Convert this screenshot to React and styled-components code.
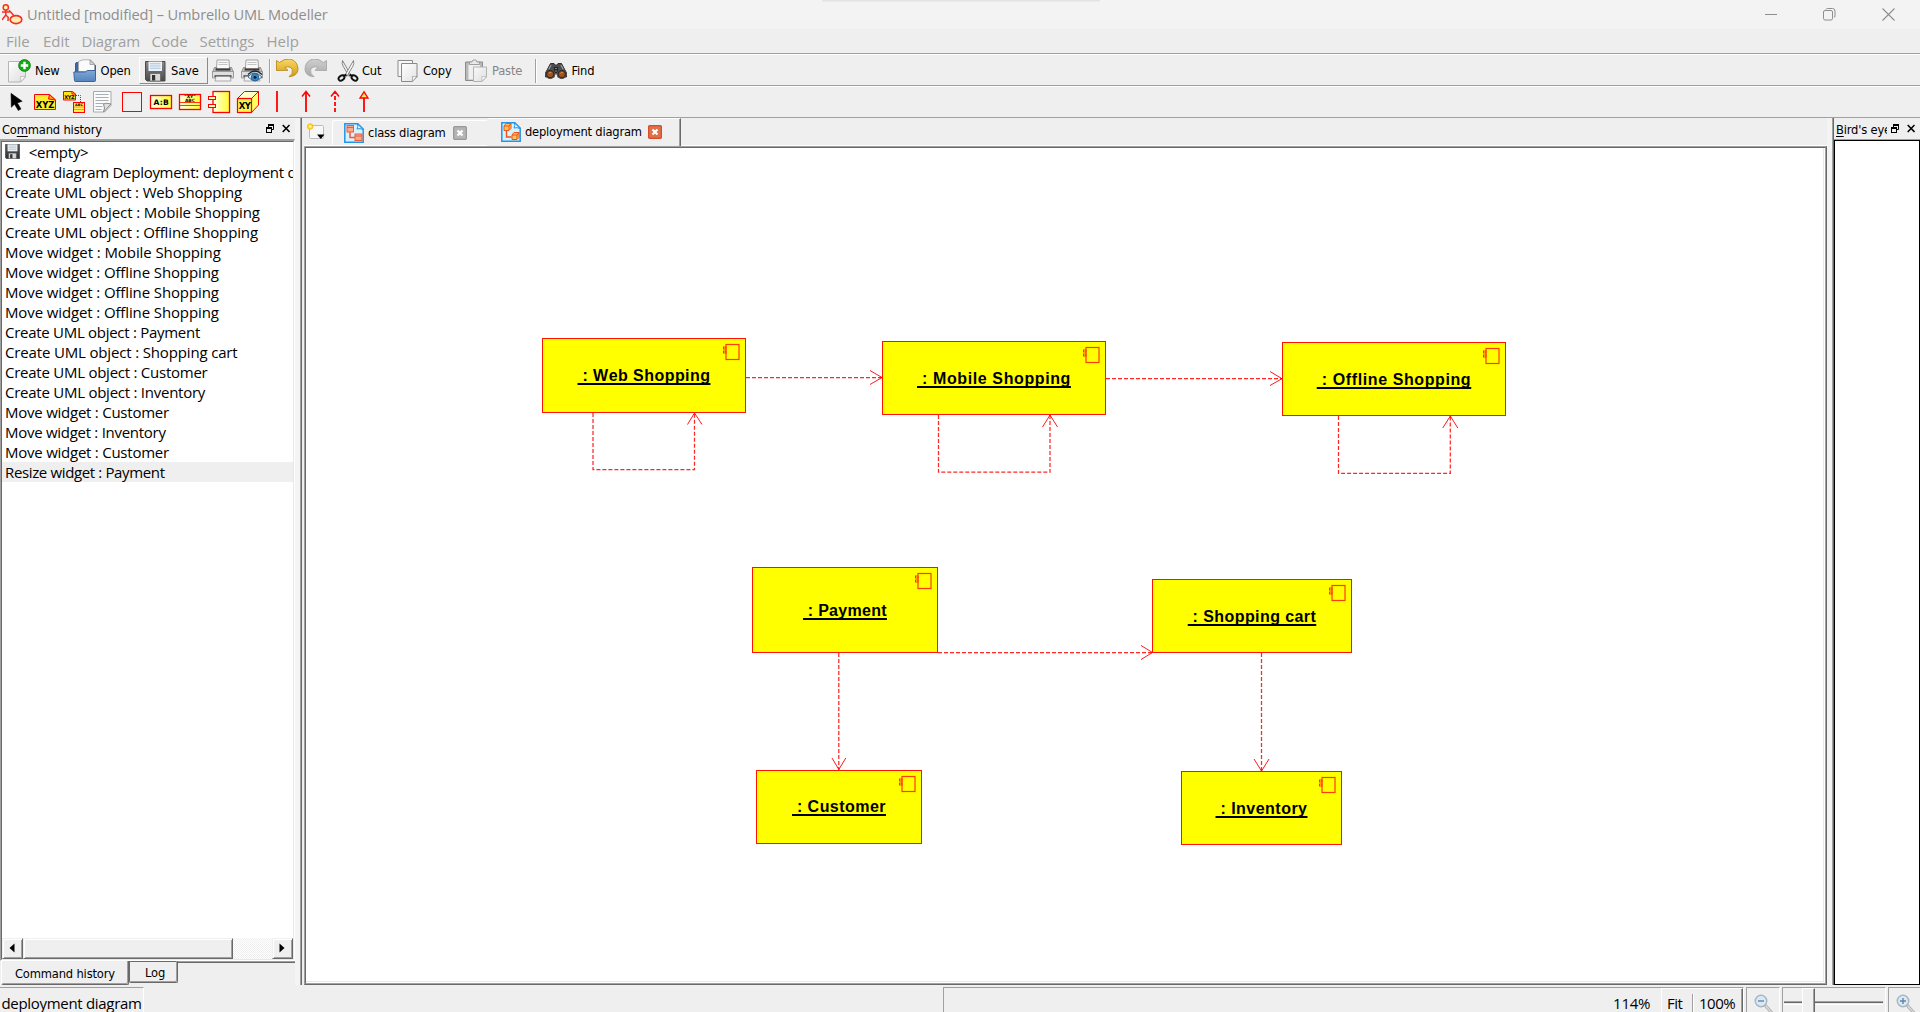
import React from "react";
import styled, { createGlobalStyle, css } from "styled-components";

const UI = `"DejaVu Sans Condensed", "DejaVu Sans", sans-serif`;
const SEGOE = `"Open Sans", "Noto Sans", sans-serif`;
const RED = "#ff0000";

const Global = createGlobalStyle`
  * { box-sizing: border-box; }
  html, body { margin: 0; padding: 0; background: #efefef; overflow: hidden; }
  svg { display: block; flex: none; }
`;

/* ---------- window ---------- */
const Window = styled.div`
  width: 1920px;
  height: 1012px;
  display: flex;
  flex-direction: column;
  overflow: hidden;
  background: #efefef;
  color: #000;
  font: 12.8px/16px ${UI};
  letter-spacing: -0.17px;
  white-space: pre;
`;
const TitleBar = styled.header`
  position: relative;
  height: 29px;
  flex: none;
  display: flex;
  align-items: center;
  background: #f3f3f3;
  padding: 0 25px 1px 2px;
`;
const TopShade = styled.div`
  position: absolute;
  top: 0;
  left: 822px;
  width: 278px;
  height: 2px;
  border-radius: 0 0 6px 6px;
  background: linear-gradient(#dedede, #efefef);
`;
const Title = styled.h1`
  margin: 0 auto 0 4px;
  font: 400 14.6px/20px ${SEGOE};
  letter-spacing: -0.13px;
  color: #8e8e8e;
`;
const WindowButtons = styled.div`
  display: flex;
  gap: 46px;
`;
const MenuBar = styled.nav`
  height: 24px;
  flex: none;
  display: flex;
  padding: 1px 0 0 6px;
  font: 15px/22px ${SEGOE};
  letter-spacing: 0;
  color: #a0a0a0;
`;
const MenuItem = styled.span`
  width: ${(p) => p.$w}px;
  letter-spacing: ${(p) => p.$ls || 0}px;
`;
const ToolBar = styled.div`
  height: 32px;
  flex: none;
  display: flex;
  align-items: center;
  border-top: 1px solid #a0a0a0;
  box-shadow: inset 0 1px #fff;
  padding: ${(p) => p.$top || 0}px 0 0 ${(p) => p.$pad}px;
`;
const ToolButton = styled.div`
  width: ${(p) => p.$w}px;
  height: 27px;
  display: flex;
  align-items: center;
  gap: ${(p) => p.$gap ?? 4}px;
  padding-left: ${(p) => p.$pl ?? 3}px;
  border: 1px solid transparent;
  color: ${(p) => (p.$off ? "#868686" : "#000")};
  ${(p) =>
    p.$raised &&
    css`
      border-color: #fff #8a8a8a #8a8a8a #fff;
    `}
`;
const ToolCell = styled.div`
  width: 29px;
  display: flex;
  justify-content: center;
`;
const Separator = styled.i`
  width: 2px;
  height: 24px;
  margin: 0 ${(p) => p.$r}px 0 ${(p) => p.$l}px;
  border-left: 1px solid #a0a0a0;
  background: #fff;
`;

/* ---------- body ---------- */
const Body = styled.div`
  height: 868px;
  flex: none;
  display: flex;
  border-top: 1px solid #a0a0a0;
`;
const Dock = styled.aside`
  width: 295px;
  flex: none;
  display: flex;
  flex-direction: column;
  box-shadow: inset 0 1px #f8f8f8;
`;
const DockTitle = styled.div`
  height: 21px;
  flex: none;
  display: flex;
  align-items: center;
  padding: 2px ${(p) => p.$pr}px 0 2px;
`;
const DockName = styled.span`
  flex: 1;
  min-width: 0;
  overflow: hidden;
  u { text-decoration-thickness: 1px; text-underline-offset: 2px; }
`;
const DockIcons = styled.span`
  display: flex;
  gap: 8px;
  padding-left: ${(p) => p.$pl || 0}px;
  margin-bottom: 3px;
`;
const HistoryFrame = styled.div`
  height: 822px;
  flex: none;
  display: flex;
  flex-direction: column;
  border: solid;
  border-width: 2px 1px 1px 1px;
  border-color: #a0a0a0 #fff #fff #a0a0a0;
`;
const HistoryInner = styled.div`
  flex: 1;
  min-height: 0;
  display: flex;
  flex-direction: column;
  border: 1px solid;
  border-color: #696969 #e8e8e8 #e8e8e8 #696969;
  background: #fff;
`;
const History = styled.ul`
  list-style: none;
  margin: 0;
  padding: 0;
  flex: 1;
  overflow: hidden;
  font: 15px/20px ${SEGOE};
`;
const HistoryRow = styled.li`
  height: 20px;
  display: flex;
  align-items: center;
  gap: 5px;
  padding: 0 0 1px 3px;
  letter-spacing: ${(p) => p.$ls}px;
  background: ${(p) => (p.$current ? "#efefef" : "#fff")};
`;
const ScrollBar = styled.div`
  height: 21px;
  flex: none;
  display: flex;
  background: repeating-conic-gradient(#fff 0 25%, #efefef 0 50%) 0 0 / 2px 2px;
`;
const ScrollPart = styled.div`
  width: ${(p) => p.$w}px;
  margin-left: ${(p) => (p.$end ? "auto" : 0)};
  display: flex;
  align-items: center;
  justify-content: center;
  padding: 0 2px 2px 0;
  background: #efefef;
  border: 1px solid;
  border-color: #efefef #696969 #696969 #efefef;
  box-shadow: inset 1px 1px #fff, inset -1px -1px #a0a0a0;
`;
const DockTabs = styled.div`
  display: flex;
  align-items: flex-start;
  height: 24px;
`;
const DockTab = styled.div`
  width: ${(p) => p.$w}px;
  height: ${(p) => (p.$on ? 24 : 22)}px;
  display: flex;
  padding: ${(p) => (p.$on ? 5 : 4)}px 0 0 ${(p) => (p.$on ? 13 : 15)}px;
  border: solid;
  border-width: 0 1px 1px 1px;
  border-color: #696969 #696969 #696969 ${(p) => (p.$on ? "#fff" : "#696969")};
  box-shadow: inset -1px -1px #a0a0a0, inset 0 ${(p) => (p.$on ? 0 : 1)}px #696969;
  border-radius: 0 0 2px 2px;
  margin-left: ${(p) => (p.$on ? 1 : 0)}px;
`;
const DockTabsRest = styled.div`
  flex: 1;
  height: 3px;
  border-top: 1px solid #a0a0a0;
  box-shadow: inset 0 1px #696969;
`;
const Splitter = styled.div`
  width: 5px;
  flex: none;
  background: #f4f4f4;
`;
const Center = styled.main`
  width: 1527px;
  flex: none;
  display: flex;
  flex-direction: column;
  border-left: 1px solid #a0a0a0;
  box-shadow: inset 1px 0 #696969;
  padding-left: 3px;
`;
const Tabs = styled.div`
  height: 28px;
  flex: none;
  display: flex;
  align-items: flex-end;
`;
const NewTab = styled.div`
  width: 28px;
  height: 28px;
  padding: 5px 0 0 2px;
  border-bottom: 1px solid #fff;
`;
const Tab = styled.div`
  width: ${(p) => p.$w}px;
  height: ${(p) => (p.$on ? 28 : 26)}px;
  display: flex;
  align-items: center;
  padding: 0 0 ${(p) => (p.$on ? 2 : 1)}px ${(p) => (p.$on ? 14 : 11)}px;
  border: solid;
  border-width: 1px ${(p) => (p.$on ? 1 : 0)}px ${(p) => (p.$on ? 0 : 1)}px ${(p) => (p.$on ? 0 : 1)}px;
  border-color: #fff #696969 #fff #fff;
  border-radius: 3px 0 0 0;
  box-shadow: ${(p) => (p.$on ? "inset -1px 0 #a0a0a0" : "none")};
`;
const TabName = styled.span`
  width: ${(p) => p.$w}px;
  padding-left: 4px;
  letter-spacing: -0.2px;
`;
const TabsRest = styled.div`
  flex: 1;
  height: 28px;
  border-bottom: 1px solid #fff;
`;
const CanvasFrame = styled.div`
  height: 839px;
  border: 1px solid;
  border-color: #a0a0a0 #696969 #696969 #a0a0a0;
`;
const CanvasInner = styled.div`
  height: 837px;
  border: 1px solid;
  border-color: #696969 #a0a0a0 #a0a0a0 #696969;
  display: flex;
`;
const Canvas = styled.div`
  position: relative;
  flex: 1;
  background: #fff;
  overflow: hidden;
  box-shadow: inset -1px -1px #fff, inset -2px -2px #e8e8e8;
`;
const Wires = styled.svg`
  position: absolute;
  inset: 0;
`;
const Node = styled.div`
  position: absolute;
  left: ${(p) => p.$x - 306}px;
  top: ${(p) => p.$y - 148}px;
  width: ${(p) => p.$w}px;
  height: ${(p) => p.$h}px;
  display: flex;
  justify-content: center;
  background: #ffff00;
  border: 1px solid #ff1400;
  padding-top: ${(p) => p.$pt}px;
  font: 700 16px/20px "Liberation Sans", Arial, sans-serif;
  letter-spacing: ${(p) => p.$ls}px;
  font-kerning: none;
`;
const NodeName = styled.span`
  height: 20px;
  text-decoration: underline;
  text-decoration-thickness: 2px;
  text-underline-offset: 1.5px;
  text-decoration-skip-ink: none;
`;
const NodeBadge = styled.svg`
  position: absolute;
  top: 4px;
  right: 5px;
`;
const RightDock = styled.aside`
  flex: 1;
  min-width: 0;
  display: flex;
  flex-direction: column;
  border-left: 1px solid #a0a0a0;
  box-shadow: inset 1px 0 #696969;
  padding-left: 1px;
`;
const BirdView = styled.div`
  flex: 1;
  background: #fff;
  border: 1px solid #000;
`;
const BirdTop = styled.div`
  height: 1px;
  background: #a0a0a0;
`;

/* ---------- status bar ---------- */
const Status = styled.footer`
  flex: 1;
  display: flex;
  padding-top: 2px;
  font: 15px/20px ${SEGOE};
  letter-spacing: -0.31px;
`;
const StatusBox = styled.div`
  width: ${(p) => p.$w}px;
  height: 27px;
  flex: none;
  margin-right: ${(p) => p.$mr || 0}px;
  display: flex;
  justify-content: ${(p) => (p.$end ? "flex-end" : "flex-start")};
  padding: ${(p) => p.$pt ?? 5}px 0 0 ${(p) => p.$pl || 0}px;
  border: solid;
  border-width: 1px 1px 0 ${(p) => (p.$open ? 0 : 1)}px;
  border-color: #a0a0a0 #fff #fff #a0a0a0;
`;
const ZoomValue = styled.span`
  margin-right: 11px;
`;
const ZoomButtons = styled.div`
  width: 82px;
  height: 27px;
  margin-top: -5px;
  display: flex;
  border: solid;
  border-width: 1px 1px 0 1px;
  border-color: #fff #696969 #fff #fff;
  box-shadow: inset -1px 0 #a0a0a0;
`;
const ZoomButton = styled.span`
  width: ${(p) => p.$w}px;
  padding: 4px 0 0 ${(p) => p.$pl}px;
  letter-spacing: -0.5px;
`;
const ZoomSep = styled.i`
  width: 2px;
  margin-top: 5px;
  border-left: 1px solid #a0a0a0;
  background: #fff;
`;
const Groove = styled.div`
  width: ${(p) => p.$w}px;
  height: 3px;
  margin-top: 13px;
  background: #e8e8e8;
  border-top: 1px solid #a0a0a0;
  box-shadow: inset 0 1px #696969, 0 1px #fff;
`;
const Handle = styled.div`
  width: 13px;
  height: 26px;
  border: solid;
  border-width: 1px 1px 0 1px;
  border-color: #fff #696969 #fff #fff;
  box-shadow: inset -1px 0 #a0a0a0;
`;

/* ---------- icons ---------- */
const Svg = ({ s = 24, w, h, children }) => (
  <svg width={w || s} height={h || s} viewBox={`0 0 ${w || s} ${h || s}`} fill="none">
    {children}
  </svg>
);
const Grad = ({ id, a, b, d }) => (
  <linearGradient id={id} x1="0" y1="0" x2={d ? 1 : 0} y2="1">
    <stop offset="0" stopColor={a} />
    <stop offset="1" stopColor={b} />
  </linearGradient>
);
const AppIcon = () => (
  <Svg w={21} h={22}>
    <circle cx="3.8" cy="4.4" r="2.6" fill="#fff3b8" stroke="#f43023" strokeWidth="1.5" />
    <path d="M3.8 7v5M0 9h7.6M3.8 12L0 17M3.8 12l2.4 2.2L6 18M7 7.2l5.5 6" stroke="#f43023" strokeWidth="1.5" />
    <ellipse cx="14" cy="16.6" rx="5.8" ry="4" fill="#ffeeb0" stroke="#f43023" strokeWidth="1.6" />
  </Svg>
);
const MinIcon = () => (
  <Svg w={12} h={13}><path d="M0 6.5h12" stroke="#8e8e8e" /></Svg>
);
const MaxIcon = () => (
  <Svg w={13} h={13}>
    <path d="M3 1.5q.3-1 1.5-1h5q2.5 0 2.5 2.5v5q0 1.2-1 1.5" stroke="#8e8e8e" />
    <rect x=".5" y="2.5" width="9" height="9.5" rx="1.5" stroke="#8e8e8e" />
  </Svg>
);
const CloseIcon = () => (
  <Svg w={13} h={13}><path d="M.5.5l12 12M12.5.5l-12 12" stroke="#8e8e8e" strokeWidth="1.1" /></Svg>
);
const NewIcon = () => (
  <Svg>
    <defs><Grad id="nw" a="#fff" b="#dcdcdc" d /></defs>
    <path d="M1.5 2.5h17v15.5l-5 5h-12z" fill="url(#nw)" stroke="#b4b4b4" />
    <path d="M18.5 17.5q-4 .3-5 0 .6 3 0 5.5z" fill="#fff" stroke="#b4b4b4" strokeWidth=".8" />
    <circle cx="17.5" cy="6.5" r="5.9" fill="#16a816" stroke="#0b7d10" strokeWidth=".8" />
    <path d="M17.5 2.8v7.4M13.8 6.5h7.4" stroke="#fff" strokeWidth="2.4" />
  </Svg>
);
const OpenIcon = () => (
  <Svg>
    <defs><Grad id="op" a="#7fa8d6" b="#5583bd" /></defs>
    <path d="M2.5 22V5q0-1.5 1.5-1.5h3l2 2H21q1.5 0 1.5 1.5v13z" fill="#3d6aa6" stroke="#365d92" />
    <path d="M5.5 12.5V2.5L10 .8h7.5l4 4v8z" fill="#fbfbfb" stroke="#a3a3a3" strokeWidth=".8" />
    <path d="M17 1v4.5h4.5z" fill="#d6d6d6" stroke="#8d8d8d" strokeWidth=".7" />
    <path d="M.8 13h11.5l2-1.5h8.2v10q0 1-1 1H2.5q-1 0-1-1z" fill="url(#op)" stroke="#3c659c" />
  </Svg>
);
const SaveIcon = ({ s = 24, dark }) => (
  <svg width={s} height={s} viewBox={dark ? "2 2 20.5 20.5" : "0 0 24 24"} fill="none">
    <defs><Grad id={dark ? "svd" : "sv"} a={dark ? "#5a5a5a" : "#8a8a8a"} b={dark ? "#303030" : "#4b4b4b"} /></defs>
    <path d="M2.5 2.5h19.5v19.5H4l-1.5-1.5z" fill={`url(#${dark ? "svd" : "sv"})`} stroke="#4a4a4a" />
    <path d="M5.5 2.5h13.5v9.5H5.5z" fill="#eef2f6" />
    <path d="M7 4.7h10.5M7 7h10.5M7 9.3h10.5" stroke="#a9c4dd" strokeWidth="1.1" />
    <path d="M7 14.5h10.5v7.5H7z" fill="#d9d9d9" stroke="#555" strokeWidth=".6" />
    <path d="M9 16h3.2v5.5H9z" fill="#333" />
  </svg>
);
const Printer = () => (
  <>
    <path d="M6 1h12l.5 9h-13z" fill="#fafafa" stroke="#9a9a9a" strokeWidth=".9" />
    <path d="M7.5 3.5h9M7.5 5.5h9" stroke="#c4c4c4" />
    <path d="M3.5 8.5h2v2h13v-2h2l2 5H1.5z" fill="#c9c9c9" stroke="#7a7a7a" strokeWidth=".8" />
    <path d="M4.5 10.5h15" stroke="#3c3c3c" strokeWidth="2.2" />
    <path d="M1.5 12.5h21v6.5h-21z" fill="#dedede" stroke="#8a8a8a" strokeWidth=".8" />
    <path d="M3.5 17.3h17" stroke="#3a3a3a" strokeWidth="2" />
    <path d="M5 17.5h14l1 4.5H4z" fill="#f2f2f2" stroke="#999" strokeWidth=".8" />
  </>
);
const PrintIcon = () => <Svg><Printer /></Svg>;
const PreviewIcon = () => (
  <Svg>
    <Printer />
    <path d="M8 18q6-8 14 0-7 7-14 0z" fill="#e4f0f8" stroke="#3d6e94" strokeWidth="1" />
    <path d="M8 15.5q7-7 14 0" stroke="#222" strokeWidth="1.3" />
    <circle cx="15" cy="18.3" r="3.8" fill="#3a8ac8" stroke="#1b5580" strokeWidth=".8" />
    <circle cx="15" cy="18.3" r="1.5" fill="#0a2236" />
  </Svg>
);
const Turn = ({ id, a, b, line }) => (
  <>
    <defs><Grad id={id} a={a} b={b} /></defs>
    <path
      d="M1.5 1.5L4.5 3.5Q9 -.5 15 0 23 2 23 10.5 22.5 17 14 17.8 18.5 14.5 17.3 10.5 15 6.5 9.8 8.5L13 11.3 1.5 11.5z"
      fill={`url(#${id})`} stroke={line} strokeWidth=".9" strokeLinejoin="round"
    />
  </>
);
const UndoIcon = () => <Svg><Turn id="un" a="#f7d96a" b="#d69b0c" line="#b98a1c" /></Svg>;
const RedoIcon = () => (
  <Svg><g transform="matrix(-1 0 0 1 24 0)"><Turn id="re" a="#cfcfcf" b="#a9a9a9" line="#a6a6a6" /></g></Svg>
);
const CutIcon = () => (
  <Svg>
    <path d="M6.5 1.5q-1 3 .8 6l6 10 1.5-1.5z" fill="#f4f4f4" stroke="#777" strokeWidth=".9" />
    <path d="M17.5 1.5q1 3-.8 6l-6 10-1.5-1.5z" fill="#fff" stroke="#777" strokeWidth=".9" />
    <path d="M10.5 15.5Q9 17 7 16.5M13.5 15.5Q15 17 17 16.5" stroke="#111" strokeWidth="2" />
    <ellipse cx="5.5" cy="19" rx="3.2" ry="2.3" transform="rotate(-38 5.5 19)" stroke="#111" strokeWidth="1.9" />
    <ellipse cx="18.5" cy="19" rx="3.2" ry="2.3" transform="rotate(38 18.5 19)" stroke="#111" strokeWidth="1.9" />
  </Svg>
);
const CopyIcon = () => (
  <Svg>
    <defs><Grad id="cp" a="#fff" b="#e2e2e2" d /></defs>
    <path d="M3 1.5h14.5v16H3z" fill="#f8f8f8" stroke="#8a8a8a" />
    <path d="M6.5 4.5H22V18l-4.5 4.5h-11z" fill="url(#cp)" stroke="#8a8a8a" />
    <path d="M22 17.5q-3 .6-4.7 0 .6 2.5 0 5z" fill="#fff" stroke="#9a9a9a" strokeWidth=".8" />
  </Svg>
);
const PasteIcon = () => (
  <Svg>
    <defs><Grad id="pa" a="#fafafa" b="#dedede" d /></defs>
    <path d="M1.5 3h17v18.5h-17z" fill="#b9b9b9" stroke="#8c8c8c" />
    <path d="M4.5 5.5h11.5v15H4.5z" fill="#f0f0f0" />
    <path d="M5.5 5.5v-2.5h2.5L9 1h3l1 2h2.5v2.5z" fill="#e9e9e9" stroke="#999" strokeWidth=".9" />
    <path d="M9.5 8H22.5v10l-4.5 4.5H9.5z" fill="url(#pa)" stroke="#b2b2b2" />
    <path d="M22.5 17.5q-3 .6-4.7 0 .6 2.5 0 5z" fill="#fff" stroke="#b5b5b5" strokeWidth=".8" />
  </Svg>
);
const FindIcon = () => (
  <Svg>
    <path d="M6.5 4.5h3.5l2 2 2-2h3.5l5 9.5v4H1.5v-4z" fill="#4c4c4c" stroke="#222" strokeWidth=".9" />
    <path d="M10.5 17L12 14.5 13.5 17V19h-3z" fill="#efefef" />
    <path d="M7 6L4 12M17 6l3 6" stroke="#9a9a9a" strokeWidth="1.3" />
    <path d="M10 8h4v6h-4z" fill="#222" />
    <path d="M11 9.5h2M11 12h2" stroke="#888" />
    <circle cx="6.2" cy="15" r="4.6" fill="#2b2b2b" stroke="#555" />
    <circle cx="17.8" cy="15" r="4.6" fill="#2b2b2b" stroke="#555" />
    <circle cx="6.2" cy="15.2" r="2.9" fill="#a4501a" />
    <circle cx="17.8" cy="15.2" r="2.9" fill="#a4501a" />
    <path d="M4.8 14.5q1-1.5 2.5-.8M16.4 14.5q1-1.5 2.5-.8" stroke="#e49a4c" />
  </Svg>
);

const YellowDefs = () => (
  <defs><linearGradient id="yl" x1="0" y1="0" x2="1" y2="0"><stop offset="0" stopColor="#ffffe6" /><stop offset="1" stopColor="#ffff30" /></linearGradient></defs>
);
const IconText = styled.text`
  font: 700 ${(p) => p.$s}px "DejaVu Sans", sans-serif;
  fill: #000;
  letter-spacing: ${(p) => p.$ls || 0}px;
  text-anchor: middle;
`;
const PointerIcon = () => (
  <Svg>
    <path d="M7 3.3l.3 14 3.2-3 3.8 6.2 2.7-1.6-3.6-6 4.8-1.6z" fill="#000" stroke="#000" strokeWidth=".5" />
  </Svg>
);
const ObjectIcon = () => (
  <Svg>
    <path d="M1.5 4.5h15l6 5.5v9.5h-21z" fill="#ffee30" stroke={RED} />
    <path d="M16.5 4.5L15.5 9l7 1z" fill="#ff9a20" stroke={RED} />
    <IconText x="12" y="17.5" $s={8.5} $ls={-0.2}>XYZ</IconText>
  </Svg>
);
const InstanceIcon = () => (
  <Svg>
    <path d="M1.5 1.5h9l3 2.5v6h-12z" fill="#ffe21a" stroke={RED} />
    <path d="M10 1.5v2.5h3.5" stroke={RED} />
    <IconText x="7.3" y="8.8" $s={5} $ls={-0.3}>XYZ</IconText>
    <path d="M14 5.5h4.5v7" stroke={RED} strokeDasharray="1 1" />
    <rect x="11.5" y="12.5" width="11" height="10" fill="#ffee50" stroke={RED} />
    <path d="M12 17h10M12 19.5h10" stroke="#ff7a3a" strokeWidth=".8" />
    <IconText x="17" y="16.3" $s={3.5}>ABC</IconText>
  </Svg>
);
const NoteIcon = () => (
  <Svg>
    <path d="M2.5 1.5h17.5v14l-6.5 6.5h-11z" fill="#fbfbfb" stroke="#a8a8a8" />
    <path d="M4.5 4.5h13M4.5 7.5h13M4.5 10.5h13M4.5 13.5h9M4.5 16.5h7M4.5 19.5h6" stroke="#a6aeb6" strokeWidth="1" />
    <path d="M20 14q-5-1.5-7.5 0 2 4 0 8z" fill="#e0e0e0" stroke="#8c8c8c" />
  </Svg>
);
const BoxIcon = () => (
  <Svg><rect x="2.5" y="2.5" width="19" height="19" stroke={RED} /></Svg>
);
const AbIcon = () => (
  <Svg>
    <YellowDefs />
    <rect x="1.5" y="5.5" width="21" height="13" fill="url(#yl)" stroke={RED} strokeWidth="1.3" />
    <IconText x="12.2" y="14.8" $s={7.6} $ls={0.2}>A:B</IconText>
  </Svg>
);
const ArtifactIcon = () => (
  <Svg>
    <rect x="1.5" y="4.5" width="21" height="15" fill="url(#yl)" stroke={RED} strokeWidth="1.3" />
    <path d="M2 12.5h20M2 15.5h20" stroke="#ff3a10" />
    <IconText x="12" y="8" $s={4.5}>"XY"</IconText>
    <IconText x="12" y="11.8" $s={4.5}>ABC</IconText>
  </Svg>
);
const ComponentIcon = () => (
  <Svg>
    <rect x="6" y="1.5" width="16.5" height="21" fill="url(#yl)" stroke={RED} strokeWidth="1.3" />
    <rect x="1.5" y="6.5" width="7" height="3" fill="#ffffc0" stroke={RED} />
    <rect x="1.5" y="14.5" width="7" height="3" fill="#ffffc0" stroke={RED} />
  </Svg>
);
const CubeIcon = () => (
  <Svg>
    <path d="M1.5 8.5l7-7h14l-7 7z" fill="#ffffc8" stroke={RED} />
    <path d="M15.5 8.5l7-7V15l-7 7.5z" fill="#ffff60" stroke={RED} />
    <rect x="1.5" y="8.5" width="14" height="14" fill="#fff04a" stroke={RED} strokeWidth="1.2" />
    <IconText x="8.5" y="19" $s={8.5} $ls={-0.6}>XY</IconText>
  </Svg>
);
const LineIcon = () => <Svg><path d="M12 1v21" stroke={RED} strokeWidth="1.8" /></Svg>;
const ArrowIcon = ({ dash }) => (
  <Svg>
    <path d="M12 22V2" stroke={RED} strokeWidth="1.8" strokeDasharray={dash ? "4 2" : "none"} />
    <path d="M8 6.5L12 1.5l4 5" stroke={RED} strokeWidth="1.5" />
  </Svg>
);
const DashedArrowIcon = () => <ArrowIcon dash />;
const InheritIcon = () => (
  <Svg>
    <path d="M12 22V8" stroke={RED} strokeWidth="1.8" />
    <path d="M12 1.8L8 8h8z" fill="#ffe860" stroke={RED} strokeWidth="1.3" />
  </Svg>
);
const FloatIcon = () => (
  <Svg w={8} h={9}>
    <path d="M2.5 3V.5h5v5H6" stroke="#000" /><path d="M2 1h6" stroke="#000" strokeWidth="2" />
    <rect x=".5" y="4" width="5" height="4.5" fill="#efefef" stroke="#000" /><path d="M0 4h6" stroke="#000" strokeWidth="2" />
  </Svg>
);
const XIcon = () => <Svg w={8} h={9}><path d="M.7.9l6.8 7M7.5.9l-6.8 7" stroke="#000" strokeWidth="1.5" /></Svg>;
const NewTabIcon = () => (
  <Svg w={20} h={18}>
    <path d="M3.5 2.5h13q1 0 1 1v11q0 1-1 1h-12q-1 0-1-1z" fill="#f7f7f7" stroke="#bcbcbc" />
    <circle cx="4.2" cy="3.5" r="2.8" fill="#ffd633" stroke="#f0b400" strokeWidth=".7" />
    <circle cx="4.2" cy="3.5" r="1.2" fill="#fff6b0" />
    <path d="M11 11.5h7.5L14.8 16z" fill="#000" />
  </Svg>
);
const DiagramIcon = ({ cubes }) => (
  <Svg s={20}>
    <path d="M.8.8h13L19.2 6v13.2H.8z" fill="#d9f0fd" stroke="#2495e6" strokeWidth="1.5" />
    <path d="M13.5 1q1 3-.5 5 3-1 6 .5z" fill="#fff" stroke="#2495e6" />
    {cubes ? (
      <g stroke="#e8541e" fill="#ffc35a">
        <path d="M3 4l2-2.5h5V6.5l-2 2H3zM3 4h5v4M8 4l2-2.5" /><path d="M11 13l2-2.5h5v5l-2 2h-5zM11 13h5v4M16 13l2-2.5" />
        <path d="M5.5 9v6h5" fill="none" strokeWidth="1.4" />
      </g>
    ) : (
      <g stroke="#ee5c3a" fill="#fba88c">
        <rect x="3" y="2.5" width="6.5" height="6.5" /><rect x="11" y="11" width="7" height="6.5" />
        <path d="M3 4.5h6.5M11 13h7" /><path d="M6 9v5.5h5" fill="none" strokeWidth="1.5" />
      </g>
    )}
  </Svg>
);
const TabClose = ({ hot }) => (
  <Svg s={14}>
    <rect x=".6" y=".6" width="12.8" height="12.8" rx="1.2" fill={hot ? "#e0704a" : "#b4b4b4"} stroke={hot ? "#d84a28" : "#989898"} strokeWidth="1.2" />
    <path d="M4.5 4.5l5 5M9.5 4.5l-5 5" stroke="#fff" strokeWidth="2.2" />
  </Svg>
);
const Lens = ({ plus }) => (
  <Svg w={20} h={20}>
    <path d="M11 11l7 8" stroke="#b0b0b0" strokeWidth="3.2" />
    <path d="M11.5 11.5l6.5 7.5" stroke="#dedede" strokeWidth="1.2" />
    <circle cx="7" cy="7" r="5.7" fill="#dbe9f5" stroke="#a9b6c2" strokeWidth="1.5" />
    <path d={plus ? "M4 7h6M7 4v6" : "M4 7h6"} stroke="#5d86ad" strokeWidth="1.4" />
  </Svg>
);

/* ---------- data ---------- */
const MENU = [["File", 37], ["Edit", 38.5], ["Diagram", 70, -0.15], ["Code", 48], ["Settings", 67, -0.1], ["Help", 40]];
const TOOLS = [PointerIcon, ObjectIcon, InstanceIcon, NoteIcon, BoxIcon, AbIcon, ArtifactIcon, ComponentIcon, CubeIcon, LineIcon, ArrowIcon, DashedArrowIcon, InheritIcon];
const HISTORY = [
  ["Create diagram Deployment: deployment diagram", -0.28],
  ["Create UML object : Web Shopping", -0.16],
  ["Create UML object : Mobile Shopping", -0.1],
  ["Create UML object : Offline Shopping", -0.13],
  ["Move widget : Mobile Shopping", -0.08],
  ["Move widget : Offline Shopping", -0.12],
  ["Move widget : Offline Shopping", -0.12],
  ["Move widget : Offline Shopping", -0.12],
  ["Create UML object : Payment", -0.28],
  ["Create UML object : Shopping cart", -0.155],
  ["Create UML object : Customer", -0.25],
  ["Create UML object : Inventory", -0.25],
  ["Move widget : Customer", -0.24],
  ["Move widget : Inventory", -0.28],
  ["Move widget : Customer", -0.24],
  ["Resize widget : Payment", -0.36],
];
const NODES = [
  { name: "Web Shopping", x: 542, y: 338, w: 204, h: 75, ls: 0.45, pt: 27 },
  { name: "Mobile Shopping", x: 882, y: 341, w: 224, h: 74, ls: 0.6, pt: 27 },
  { name: "Offline Shopping", x: 1282, y: 342, w: 224, h: 74, ls: 0.6, pt: 27 },
  { name: "Payment", x: 752, y: 567, w: 186, h: 86, ls: 0.3, pt: 33 },
  { name: "Customer", x: 756, y: 770, w: 166, h: 74, ls: 0.46, pt: 26 },
  { name: "Shopping cart", x: 1152, y: 579, w: 200, h: 74, ls: 0.42, pt: 27 },
  { name: "Inventory", x: 1181, y: 771, w: 161, h: 74, ls: 0.48, pt: 27 },
];
const WIRES = [
  "M746 377.5H882", "M1106 378.7H1282",
  "M593 413V469.6H694.5V413", "M938.5 415V472.2H1050V415", "M1338.5 416V473.4H1450.3V416",
  "M938 652.5H1152", "M838.8 653V770", "M1261.5 653V771",
];
const HEADS = [
  "M870 370.5L882 377.5 870 384.5", "M1270 371.5L1282 378.7 1270 385.5",
  "M687.5 424.5L694.5 413 702 424.5", "M1042.5 427L1050 415 1057.5 427", "M1442.8 428L1450.3 416 1457.8 428",
  "M1141 645.5L1152.5 652.5 1141 659.5", "M832 758L838.8 769.5 845.8 758", "M1254 759L1261.5 771 1269 759",
];

export default function App() {
  return (
    <Window>
      <Global />
      <TitleBar>
        <TopShade />
        <AppIcon />
        <Title>Untitled [modified] – Umbrello UML Modeller</Title>
        <WindowButtons><MinIcon /><MaxIcon /><CloseIcon /></WindowButtons>
      </TitleBar>
      <MenuBar>
        {MENU.map(([t, w, ls]) => <MenuItem key={t} $w={w} $ls={ls}>{t}</MenuItem>)}
      </MenuBar>
      <ToolBar $pad={3} $top={2}>
        <ToolButton $w={65.5}><NewIcon />New</ToolButton>
        <ToolButton $w={70.5}><OpenIcon />Open</ToolButton>
        <ToolButton $w={69} $raised><SaveIcon />Save</ToolButton>
        <ToolCell><PrintIcon /></ToolCell>
        <ToolCell><PreviewIcon /></ToolCell>
        <Separator $l={3} $r={1} />
        <ToolCell><UndoIcon /></ToolCell>
        <ToolCell><RedoIcon /></ToolCell>
        <ToolButton $w={61} $pl={5} $gap={2}><CutIcon />Cut</ToolButton>
        <ToolButton $w={69}><CopyIcon />Copy</ToolButton>
        <ToolButton $w={73} $off><PasteIcon />Paste</ToolButton>
        <Separator $l={2} $r={2.5} />
        <ToolButton $w={60}><FindIcon />Find</ToolButton>
      </ToolBar>
      <ToolBar $pad={1.5}>
        {TOOLS.map((Icon, i) => <ToolCell key={i}><Icon /></ToolCell>)}
      </ToolBar>
      <Body>
        <Dock>
          <DockTitle $pr={5}>
            <DockName>Co<u>m</u>mand history</DockName>
            <DockIcons><FloatIcon /><XIcon /></DockIcons>
          </DockTitle>
          <HistoryFrame>
            <HistoryInner>
              <History>
                <HistoryRow $ls={-0.25}><SaveIcon s={15} dark />{" <empty>"}</HistoryRow>
                {HISTORY.map(([t, ls], i) => (
                  <HistoryRow key={i} $ls={ls} $current={i === HISTORY.length - 1}>{t}</HistoryRow>
                ))}
              </History>
              <ScrollBar>
                <ScrollPart $w={21}><Svg w={6} h={10}><path d="M5.5.5v9L.5 5z" fill="#000" /></Svg></ScrollPart>
                <ScrollPart $w={210} />
                <ScrollPart $w={21} $end><Svg w={6} h={10}><path d="M.5.5v9L5.5 5z" fill="#000" /></Svg></ScrollPart>
              </ScrollBar>
            </HistoryInner>
          </HistoryFrame>
          <DockTabs>
            <DockTab $w={128} $on>Command history</DockTab>
            <DockTab $w={49}>Log</DockTab>
            <DockTabsRest />
          </DockTabs>
        </Dock>
        <Splitter />
        <Center>
          <Tabs>
            <NewTab><NewTabIcon /></NewTab>
            <Tab $w={155}><DiagramIcon /><TabName $w={89}>class diagram</TabName><TabClose /></Tab>
            <Tab $w={194} $on><DiagramIcon cubes /><TabName $w={127}>deployment diagram</TabName><TabClose hot /></Tab>
            <TabsRest />
          </Tabs>
          <CanvasFrame>
            <CanvasInner>
              <Canvas>
                <Wires width="1517" height="836" viewBox="306 148 1517 836" fill="none" stroke={RED}>
                  {WIRES.map((d) => <path key={d} d={d} strokeDasharray="4 2" strokeWidth="1.25" opacity=".85" />)}
                  {HEADS.map((d) => <path key={d} d={d} opacity=".9" />)}
                </Wires>
                {NODES.map((n) => (
                  <Node key={n.name} $x={n.x} $y={n.y} $w={n.w} $h={n.h} $ls={n.ls} $pt={n.pt}>
                    <NodeName>{" : " + n.name}</NodeName>
                    <NodeBadge width="18" height="18" viewBox="0 0 18 18" fill="none" stroke="#ff3c00">
                      <rect x="4" y="1.5" width="13" height="15" strokeWidth="1.2" />
                      <rect x="1.5" y="4" width="2.5" height="2" /><rect x="1.5" y="8" width="2.5" height="2" />
                    </NodeBadge>
                  </Node>
                ))}
              </Canvas>
            </CanvasInner>
          </CanvasFrame>
        </Center>
        <Splitter />
        <RightDock>
          <DockTitle $pr={5}>
            <DockName><u>B</u>ird's eye view</DockName>
            <DockIcons $pl={4}><FloatIcon /><XIcon /></DockIcons>
          </DockTitle>
          <BirdTop />
          <BirdView />
        </RightDock>
      </Body>
      <Status>
        <StatusBox $w={144} $open $mr={799} $pl={1.5}>deployment diagram</StatusBox>
        <StatusBox $w={801} $end $mr={2}>
          <ZoomValue>114%</ZoomValue>
          <ZoomButtons>
            <ZoomButton $w={30} $pl={5}>Fit</ZoomButton>
            <ZoomSep />
            <ZoomButton $w={46} $pl={5}>100%</ZoomButton>
          </ZoomButtons>
        </StatusBox>
        <StatusBox $w={34} $mr={2} $pl={7} $pt={6}><Lens /></StatusBox>
        <StatusBox $w={104} $mr={2} $pl={1} $pt={0}>
          <Groove $w={18} />
          <Handle />
          <Groove $w={68} />
        </StatusBox>
        <StatusBox $w={34} $pl={7} $pt={6}><Lens plus /></StatusBox>
      </Status>
    </Window>
  );
}
